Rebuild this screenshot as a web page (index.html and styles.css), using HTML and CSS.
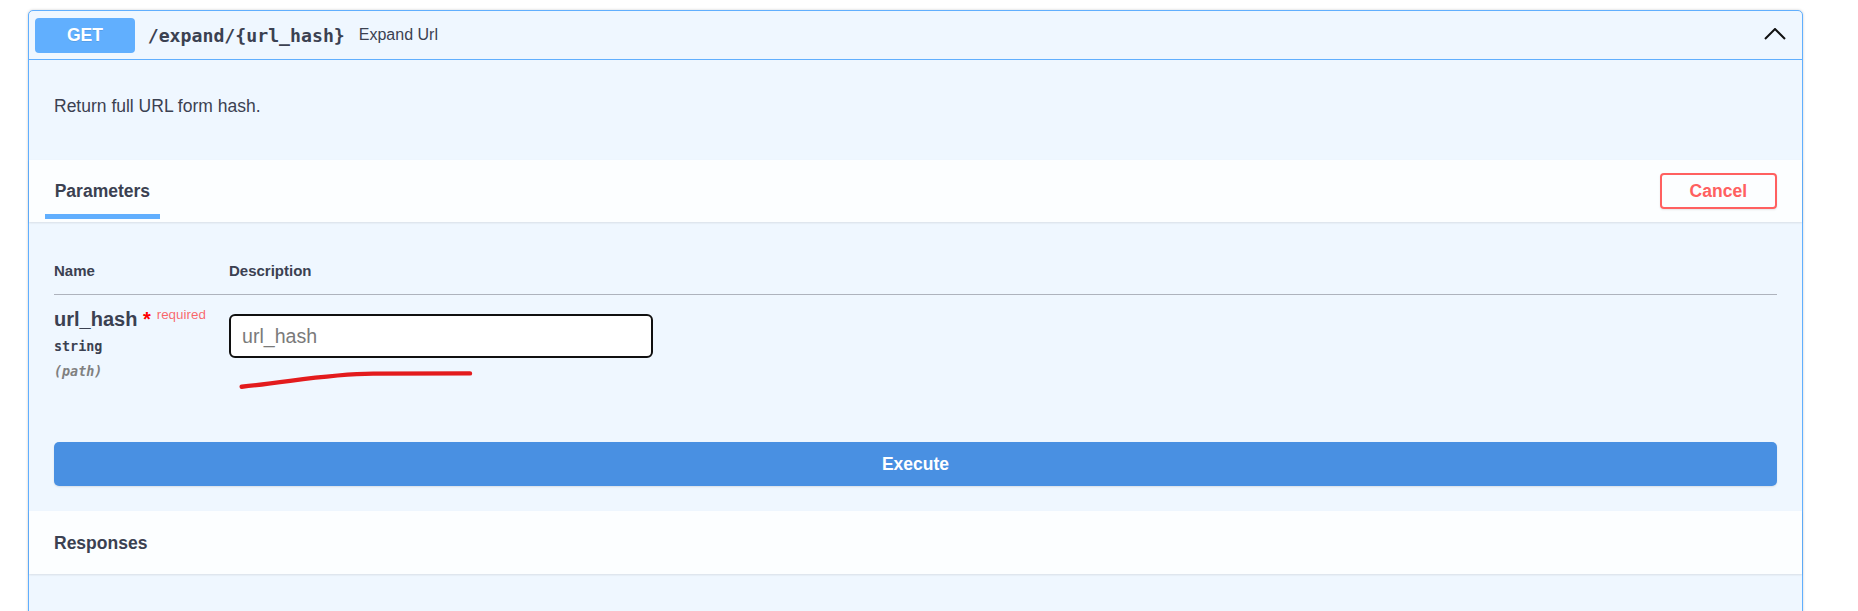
FILE: index.html
```html
<!DOCTYPE html>
<html lang="en">
<head>
<meta charset="utf-8">
<title>Expand Url</title>
<link rel="stylesheet" href="styles.css">
</head>
<body>
<div class="opblock">
  <div class="summary">
    <span class="method">GET</span>
    <span class="path">/expand/{url_hash}</span>
    <span class="summary-desc">Expand Url</span>
    <svg class="arrow" width="22" height="12" viewBox="0 0 22 12" aria-hidden="true">
      <polyline points="1,11 11,1 21,11" fill="none" stroke="#111" stroke-width="2"/>
    </svg>
  </div>
  <div class="desc"><p>Return full URL form hash.</p></div>
  <div class="section-header">
    <div class="tab">Parameters</div>
    <button class="btn-cancel">Cancel</button>
  </div>
  <div class="params">
    <div class="params-head">
      <div class="col-name">Name</div>
      <div class="col-desc">Description</div>
    </div>
    <div class="param-row">
      <div class="col-name">
        <div class="pname">url_hash<span class="star">&nbsp;*</span><span class="req">required</span></div>
        <div class="ptype">string</div>
        <div class="pin">(path)</div>
      </div>
      <div class="col-desc">
        <input class="pinput" type="text" placeholder="url_hash">
      </div>
    </div>
    <svg class="scribble" width="240" height="24" viewBox="0 0 240 24" aria-hidden="true">
      <path d="M3.7 19.7 C 55 14.5, 90 6.8, 135 6.6 L 232 6.4" fill="none" stroke="#e31b1d" stroke-width="4.4" stroke-linecap="round" stroke-linejoin="round"/>
    </svg>
    <button class="btn-execute">Execute</button>
  </div>
  <div class="section-header resp">
    <div class="resp-title">Responses</div>
  </div>
  <div class="resp-body"></div>
</div>
</body>
</html>
```
FILE: styles.css
```css
html, body {
  margin: 0;
  padding: 0;
  overflow: hidden;
  background: #fff;
}
body {
  font-family: "Liberation Sans", Arial, sans-serif;
  color: #3b4151;
}
.opblock {
  margin: 10px 0 0 28px;
  width: 1775px;
  box-sizing: border-box;
  border: 1px solid #61affe;
  border-radius: 5px;
  background: #eff7ff;
  box-shadow: 0 0 3px rgba(0, 0, 0, .19);
}
.summary {
  display: flex;
  align-items: center;
  height: 49px;
  box-sizing: border-box;
  padding: 0 16px 0 6px;
  border-bottom: 1px solid #61affe;
}
.method {
  display: flex;
  align-items: center;
  justify-content: center;
  width: 100px;
  height: 35px;
  background: #61affe;
  color: #fff;
  font-weight: bold;
  font-size: 17.5px;
  border-radius: 4px;
  text-shadow: 0 1px 0 rgba(0, 0, 0, .1);
}
.path {
  margin-left: 12.7px;
  font-family: "DejaVu Sans Mono", "Liberation Mono", monospace;
  font-weight: bold;
  font-size: 18.2px;
  color: #3b4151;
}
.summary-desc {
  margin-left: 14px;
  font-size: 16px;
  color: #3b4151;
}
.arrow {
  margin-left: auto;
  margin-bottom: 3px;
}
.desc {
  height: 100px;
  box-sizing: border-box;
  padding: 36px 25px 0;
}
.desc p {
  margin: 0;
  font-size: 17.5px;
  line-height: 20px;
}
.section-header {
  position: relative;
  z-index: 1;
  display: flex;
  align-items: center;
  height: 62px;
  box-sizing: border-box;
  padding: 0 25px 0 16px;
  background: rgba(255, 255, 255, .8);
  box-shadow: 0 1px 2px rgba(0, 0, 0, .1);
}
.tab {
  align-self: flex-end;
  margin-bottom: 3px;
  padding: 0 9.7px 13px;
  border-bottom: 5px solid #61affe;
  font-weight: bold;
  font-size: 17.5px;
  line-height: 20px;
}
.btn-cancel {
  margin-left: auto;
  height: 36px;
  padding: 0 28px;
  border: 2px solid #ff6060;
  border-radius: 4px;
  background: transparent;
  color: #ff6060;
  font-family: "Liberation Sans", Arial, sans-serif;
  font-weight: bold;
  font-size: 17.5px;
  box-shadow: 0 1px 2px rgba(0, 0, 0, .1);
}
.params {
  position: relative;
  padding: 40px 25px 25px;
}
.params-head {
  display: flex;
  padding-bottom: 14px;
  border-bottom: 1px solid #aeb3bd;
  font-weight: bold;
  font-size: 15px;
  line-height: 18px;
}
.col-name {
  width: 175px;
  flex: none;
}
.param-row {
  display: flex;
  padding-top: 12px;
}
.pname {
  font-weight: bold;
  font-size: 20px;
  line-height: 24px;
  white-space: nowrap;
}
.star {
  color: #f00;
}
.req {
  position: relative;
  top: -7.5px;
  padding-left: 6px;
  font-weight: normal;
  font-size: 13.4px;
  line-height: 1;
  color: rgba(255, 0, 0, .6);
}
.ptype {
  margin-top: 7px;
  font-family: "DejaVu Sans Mono", "Liberation Mono", monospace;
  font-weight: bold;
  font-size: 13.4px;
  line-height: 18px;
}
.pin {
  margin-top: 7px;
  font-family: "DejaVu Sans Mono", "Liberation Mono", monospace;
  font-weight: bold;
  font-style: italic;
  font-size: 13.4px;
  line-height: 18px;
  color: #808080;
}
.pinput {
  margin-top: 7.3px;
  width: 424px;
  height: 44px;
  box-sizing: border-box;
  border: 2px solid #101010;
  border-radius: 6px;
  padding: 0 11px;
  font-family: "Liberation Sans", Arial, sans-serif;
  font-size: 19.6px;
  background: #fff;
  outline: none;
}
.pinput::placeholder {
  color: #7a7a7a;
}
.scribble {
  position: absolute;
  left: 209px;
  top: 145px;
}
.btn-execute {
  display: block;
  width: 100%;
  height: 44px;
  margin-top: 61px;
  border: none;
  border-radius: 5px;
  background: #4990e2;
  color: #fff;
  font-family: "Liberation Sans", Arial, sans-serif;
  font-weight: bold;
  font-size: 17.5px;
  box-shadow: 0 1px 2px rgba(0, 0, 0, .1);
}
.resp {
  height: 63px;
  padding: 0 25px;
}
.resp-title {
  font-weight: bold;
  font-size: 17.5px;
  line-height: 20px;
}
.resp-body {
  height: 60px;
}
```
